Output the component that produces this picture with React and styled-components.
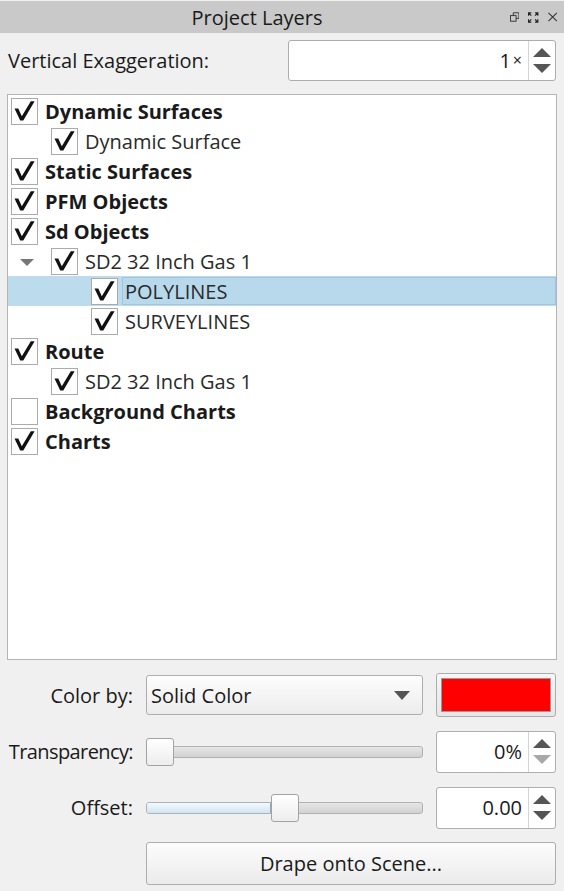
import React from "react";
import styled, { createGlobalStyle, css } from "styled-components";

const Global = createGlobalStyle`
  html, body { margin: 0; padding: 0; background: #f0f0f0; }
  body { font-family: "Open Sans", "Noto Sans", sans-serif; color: #1b1b1b; }
  * { box-sizing: border-box; }
`;

const Panel = styled.div`
  width: 564px;
  height: 891px;
  padding-top: 1px;
  display: flex;
  flex-direction: column;
  background: #f0f0f0;
`;

const TitleBar = styled.div`
  height: 32px;
  background: #c9c9c9;
  display: flex;
  align-items: center;
`;

const TitleText = styled.div`
  flex: 1;
  text-align: center;
  font-size: 20px;
  color: #1a1a1a;
  padding-left: 4px;
  padding-top: 1px;
`;

const TitleIcons = styled.div`
  width: 54px;
  display: flex;
  align-items: center;
  gap: 9px;
  padding-right: 7px;
  justify-content: flex-end;
`;

const ExagRow = styled.div`
  display: flex;
  align-items: center;
  justify-content: space-between;
  padding: 0 8px 0 8px;
  margin-top: 7px;
  height: 40px;
`;

const Label = styled.span`
  font-size: 20px;
  color: #1a1a1a;
  white-space: nowrap;
`;

const SpinBox = styled.div`
  width: ${(p) => p.$w}px;
  height: ${(p) => p.$h || 42}px;
  background: #fff;
  border: 1px solid #adadad;
  border-radius: 3px;
  display: flex;
  align-items: stretch;
`;

const SpinValue = styled.div`
  flex: 1;
  display: flex;
  align-items: center;
  justify-content: flex-end;
  padding-right: 6px;
  font-size: 20px;
  color: #1a1a1a;
`;

const Unit = styled.span`
  font-size: 16px;
  margin-left: 2px;
`;

const SpinButtons = styled.div`
  width: 27px;
  border-left: 1px solid #d4d4d4;
  display: flex;
  flex-direction: column;
  align-items: center;
  justify-content: center;
  gap: 7px;
`;

const Tri = styled.div`
  width: 0;
  height: 0;
  flex: none;
  border-left: ${(p) => p.$w / 2}px solid transparent;
  border-right: ${(p) => p.$w / 2}px solid transparent;
  ${(p) =>
    p.$up
      ? css`border-bottom: ${p.$h}px solid ${p.$c || "#555"};`
      : css`border-top: ${p.$h}px solid ${p.$c || "#555"};`}
`;

const Tree = styled.div`
  margin: 14px 7px 0 7px;
  height: 566px;
  background: #fff;
  border: 1px solid #b4b4b4;
  padding-top: 1px;
  display: flex;
  flex-direction: column;
`;

const Row = styled.div`
  height: 30px;
  display: flex;
  align-items: center;
  padding-left: 3px;
  background: ${(p) => (p.$selected ? "#bcdcee" : "transparent")};
`;

const Indent = styled.div`
  width: ${(p) => p.$level * 40}px;
  flex: none;
  display: flex;
  align-items: center;
`;

const Arrow = styled(Tri)`
  margin-left: 9px;
  margin-top: 2px;
`;

const Box = styled.div`
  width: 27px;
  height: 27px;
  flex: none;
  border: 1px solid #ababab;
  background: #fff;
  display: flex;
  align-items: center;
  justify-content: center;
`;

const ItemText = styled.div`
  flex: 1;
  align-self: stretch;
  margin: 1px 0 1px 4px;
  padding-left: 2px;
  display: flex;
  align-items: center;
  font-size: 20px;
  font-weight: ${(p) => (p.$bold ? 700 : 400)};
  color: ${(p) => (p.$bold ? "#1a1a1a" : "#2a2a2a")};
  border: 1px solid ${(p) => (p.$selected ? "#9fc6dc" : "transparent")};
  background: ${(p) => (p.$selected ? "#b8d9ec" : "transparent")};
`;

const Form = styled.div`
  display: grid;
  grid-template-columns: 126px 277px 120px;
  grid-template-rows: 44px 43px 43px 43px;
  column-gap: 13px;
  row-gap: 13px;
  padding: 0 7px 0 7px;
  margin-top: 13px;
  align-items: center;
`;

const FormLabel = styled.div`
  text-align: right;
  font-size: 20px;
  letter-spacing: ${(p) => (p.$tight ? "-0.6px" : "0")};
  color: #1a1a1a;
  white-space: nowrap;
`;

const Combo = styled.div`
  height: 40px;
  border: 1px solid #adadad;
  border-radius: 3px;
  background: linear-gradient(#fdfdfd, #ececec);
  display: flex;
  align-items: center;
  justify-content: space-between;
  padding: 0 12px 0 4px;
  font-size: 20px;
  color: #1a1a1a;
`;

const ColorButton = styled.div`
  height: 44px;
  border: 1px solid #adadad;
  border-radius: 3px;
  background: linear-gradient(#f6f6f6, #e6e6e6);
  padding: 4px;
  display: flex;
`;

const Swatch = styled.div`
  flex: 1;
  background: #ff0000;
  border: 1px solid #9a9a9a;
`;

const Slider = styled.div`
  position: relative;
  height: 28px;
  display: flex;
  align-items: center;
`;

const Groove = styled.div`
  flex: 1;
  height: 12px;
  border: 1px solid #b1b1b1;
  border-radius: 3px;
  background: linear-gradient(#e6e6e6, #d2d2d2);
  overflow: hidden;
  display: flex;
`;

const Fill = styled.div`
  height: 100%;
  background: linear-gradient(#f3f9fd, #cfe6f3);
  border-right: 1px solid #8fa6b6;
`;

const Handle = styled.div`
  position: absolute;
  top: 0;
  width: 28px;
  height: 28px;
  border: 1px solid #a3a3a3;
  border-radius: 3px;
  background: linear-gradient(#ffffff, #ededed);
`;

const Button = styled.div`
  grid-column: 2 / 4;
  height: 43px;
  border: 1px solid #adadad;
  border-radius: 3px;
  background: linear-gradient(#fcfcfc, #ebebeb);
  display: flex;
  align-items: center;
  justify-content: center;
  font-size: 20px;
  color: #1a1a1a;
`;

const Check = () => (
  <svg width="25" height="25" viewBox="0 0 25 25">
    <path
      d="M2.5 9.5 L6.3 9.5 L9.8 17.2 L18.8 2.2 L22.6 2.2 L11.3 21.5 L8.2 21.5 Z"
      fill="#111"
    />
  </svg>
);

const items = [
  { label: "Dynamic Surfaces", level: 0, bold: true, checked: true },
  { label: "Dynamic Surface", level: 1, checked: true },
  { label: "Static Surfaces", level: 0, bold: true, checked: true },
  { label: "PFM Objects", level: 0, bold: true, checked: true },
  { label: "Sd Objects", level: 0, bold: true, checked: true },
  { label: "SD2 32 Inch Gas 1", level: 1, checked: true, expanded: true },
  { label: "POLYLINES", level: 2, checked: true, selected: true },
  { label: "SURVEYLINES", level: 2, checked: true },
  { label: "Route", level: 0, bold: true, checked: true },
  { label: "SD2 32 Inch Gas 1", level: 1, checked: true },
  { label: "Background Charts", level: 0, bold: true, checked: false },
  { label: "Charts", level: 0, bold: true, checked: true },
];

const FloatIcon = () => (
  <svg width="10" height="10" viewBox="0 0 10 10">
    <rect x="0.5" y="3.5" width="6" height="6" fill="none" stroke="#333" />
    <path d="M3.5 3.5 V0.5 H9.5 V6.5 H6.5" fill="none" stroke="#333" />
  </svg>
);

const MaxIcon = () => (
  <svg width="11" height="11" viewBox="0 0 11 11">
    <g fill="none" stroke="#222" strokeWidth="1.2">
      <path d="M0.5 3.5 V0.5 H3.5 M0.5 0.5 L3.5 3.5" />
      <path d="M7.5 0.5 H10.5 V3.5 M10.5 0.5 L7.5 3.5" />
      <path d="M0.5 7.5 V10.5 H3.5 M0.5 10.5 L3.5 7.5" />
      <path d="M7.5 10.5 H10.5 V7.5 M10.5 10.5 L7.5 7.5" />
    </g>
  </svg>
);

const CloseIcon = () => (
  <svg width="10" height="10" viewBox="0 0 10 10">
    <path d="M0.5 0.5 L9.5 9.5 M9.5 0.5 L0.5 9.5" stroke="#333" strokeWidth="1.1" />
  </svg>
);

const Spin = ({ w, h, value, unit, downDisabled }) => (
  <SpinBox $w={w} $h={h}>
    <SpinValue>
      {value}
      {unit && <Unit>{unit}</Unit>}
    </SpinValue>
    <SpinButtons>
      <Tri $up $w={18} $h={9} />
      <Tri $w={18} $h={9} $c={downDisabled ? "#a8a8a8" : "#555"} />
    </SpinButtons>
  </SpinBox>
);

export default function App() {
  return (
    <>
      <Global />
      <Panel>
        <TitleBar>
          <TitleText>Project Layers</TitleText>
          <TitleIcons>
            <FloatIcon />
            <MaxIcon />
            <CloseIcon />
          </TitleIcons>
        </TitleBar>
        <ExagRow>
          <Label>Vertical Exaggeration:</Label>
          <Spin w={268} h={41} value="1" unit="×" />
        </ExagRow>
        <Tree>
          {items.map((it, i) => (
            <Row key={i} $selected={it.selected}>
              <Indent $level={it.level}>
                {it.expanded && <Arrow $w={14} $h={7} $c="#777" />}
              </Indent>
              <Box>{it.checked && <Check />}</Box>
              <ItemText $bold={it.bold} $selected={it.selected}>
                {it.label}
              </ItemText>
            </Row>
          ))}
        </Tree>
        <Form>
          <FormLabel>Color by:</FormLabel>
          <Combo>
            <span>Solid Color</span>
            <Tri $w={16} $h={9} $c="#555" />
          </Combo>
          <ColorButton>
            <Swatch />
          </ColorButton>

          <FormLabel $tight>Transparency:</FormLabel>
          <Slider>
            <Groove />
            <Handle style={{ left: 0 }} />
          </Slider>
          <Spin w={120} h={42} value="0%" downDisabled />

          <FormLabel>Offset:</FormLabel>
          <Slider>
            <Groove>
              <Fill style={{ width: "45%" }} />
            </Groove>
            <Handle style={{ left: "45%" }} />
          </Slider>
          <Spin w={120} h={42} value="0.00" />

          <Button>Drape onto Scene...</Button>
        </Form>
      </Panel>
    </>
  );
}
